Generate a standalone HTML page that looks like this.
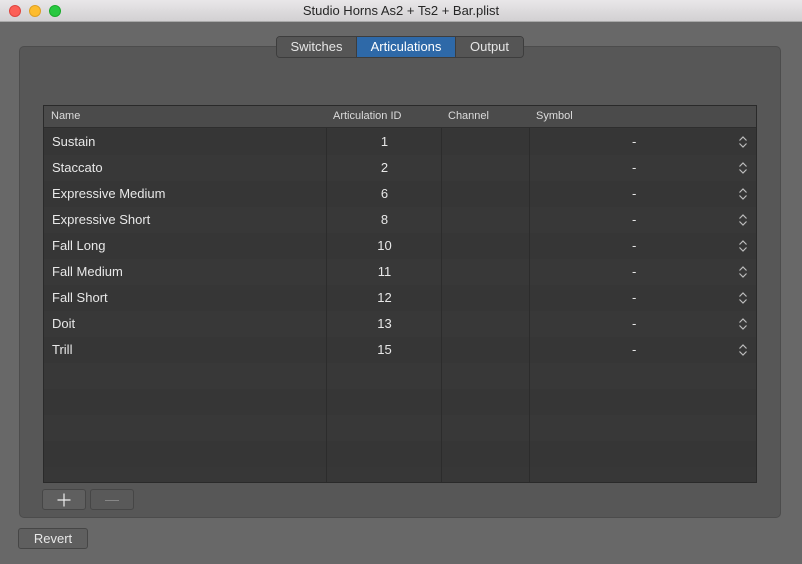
<!DOCTYPE html>
<html><head><style>
*{margin:0;padding:0;box-sizing:border-box}
body{width:802px;height:564px;background:#686868;font-family:"Liberation Sans",sans-serif;position:relative;overflow:hidden}
.title{position:absolute;left:0;top:0;width:802px;height:22px;background:linear-gradient(#e9e7e9,#d2d0d2);border-bottom:1px solid #a9a9a9;text-align:center;font-size:13px;line-height:22px;color:#262626}
.dot{position:absolute;top:5px;width:12px;height:12px;border-radius:50%}
.box{position:absolute;left:19px;top:46px;width:762px;height:472px;background:#575757;border:1px solid #4c4c4c;border-radius:5px}
.tabs{position:absolute;left:276px;top:36px;height:22px;display:flex;border:1px solid #3d3d3d;border-radius:4px;overflow:hidden;font-size:13px;color:#e6e6e6}
.tabs div{line-height:20px;text-align:center;background:#555;border-right:1px solid #3d3d3d}
.table{position:absolute;left:43px;top:105px;width:714px;height:378px;background:#373737;border:1px solid #2a2a2a;overflow:hidden}
.hdr{position:absolute;left:0;top:0;width:714px;height:22px;background:#4b4b4b;border-bottom:1px solid #2e2e2e;font-size:11px;color:#dcdcdc;line-height:21px}
.row{position:absolute;left:0;width:714px;height:26px;font-size:13px;color:#e8e8e8;line-height:26px}
.vl{position:absolute;top:0;width:1px;height:378px;background:#2c2c2c}
.btn{position:absolute;height:21px;background:#5f5f5f;border:1px solid #464646;border-radius:3px;color:#e8e8e8;text-align:center}
</style></head><body>
<div class="title">Studio Horns As2 + Ts2 + Bar.plist
<div class="dot" style="left:9px;background:#fc5f57;border:1px solid #de4540"></div>
<div class="dot" style="left:29px;background:#fdbc2e;border:1px solid #dea024"></div>
<div class="dot" style="left:49px;background:#28c840;border:1px solid #1aab2b"></div>
</div>
<div class="box"></div>
<div class="tabs">
<div style="width:80px">Switches</div>
<div style="width:99px;background:#2e69a8;color:#fff">Articulations</div>
<div style="width:67px;border-right:0">Output</div>
</div>
<div class="table">
<div class="row" style="top:23px;background:#363636"></div>
<div class="row" style="top:49px;background:#383838"></div>
<div class="row" style="top:75px;background:#363636"></div>
<div class="row" style="top:101px;background:#383838"></div>
<div class="row" style="top:127px;background:#363636"></div>
<div class="row" style="top:153px;background:#383838"></div>
<div class="row" style="top:179px;background:#363636"></div>
<div class="row" style="top:205px;background:#383838"></div>
<div class="row" style="top:231px;background:#363636"></div>
<div class="row" style="top:257px;background:#383838"></div>
<div class="row" style="top:283px;background:#363636"></div>
<div class="row" style="top:309px;background:#383838"></div>
<div class="row" style="top:335px;background:#363636"></div>
<div class="vl" style="left:282px"></div>
<div class="vl" style="left:397px"></div>
<div class="vl" style="left:485px"></div>
<div class="hdr"><span style="position:absolute;left:7px">Name</span><span style="position:absolute;left:289px">Articulation ID</span><span style="position:absolute;left:404px">Channel</span><span style="position:absolute;left:492px">Symbol</span></div>
<div id="rows"></div>
</div>
<div class="btn" style="left:42px;top:489px;width:44px"><svg width="14" height="14" style="margin-top:3px"><path d="M7 0.5V13.5M0.5 7H13.5" stroke="#eee" stroke-width="1.2"/></svg></div>
<div class="btn" style="left:90px;top:489px;width:44px;background:#595959;color:#8a8a8a;font-size:14px;line-height:18px">—</div>
<div class="btn" style="left:18px;top:528px;width:70px;font-size:13px;line-height:19px">Revert</div>
<script>
var d=[["Sustain",1],["Staccato",2],["Expressive Medium",6],["Expressive Short",8],["Fall Long",10],["Fall Medium",11],["Fall Short",12],["Doit",13],["Trill",15]];
var h="";d.forEach(function(r,i){var t=23+i*26;h+='<div class="row" style="top:'+t+'px"><span style="position:absolute;left:8px">'+r[0]+'</span><span style="position:absolute;left:283px;width:115px;text-align:center">'+r[1]+'</span><span style="position:absolute;left:588px">-</span><svg style="position:absolute;left:694px;top:6px" width="10" height="14"><path d="M1.5 5.5L5 2L8.5 5.5M1.5 8.5L5 12L8.5 8.5" stroke="#bdbdbd" stroke-width="1.2" fill="none"/></svg></div>';});
document.getElementById("rows").innerHTML=h;
</script>
</body></html>
